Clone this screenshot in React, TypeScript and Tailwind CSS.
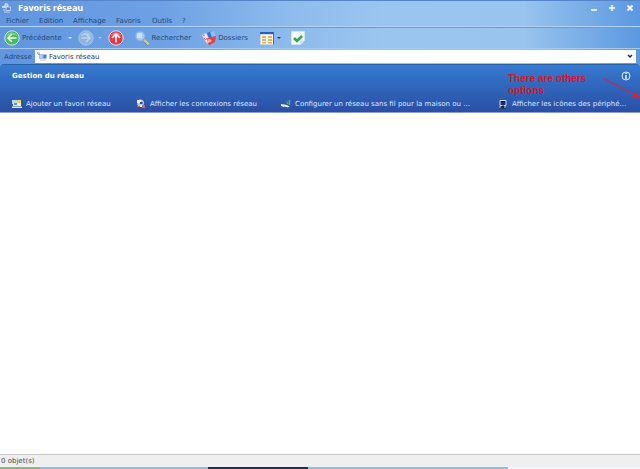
import type { ReactNode } from "react";

const menus = [
  { label: "Fichier", width: "w-[33px]" },
  { label: "Edition", width: "w-[34px]" },
  { label: "Affichage", width: "w-[43px]" },
  { label: "Favoris", width: "w-[36px]" },
  { label: "Outils", width: "w-[30px]" },
  { label: "?", width: "w-3" },
];

function AppIcon() {
  return (
    <svg viewBox="0 0 12 12" className="size-3 shrink-0" aria-hidden="true">
      <path d="M1 4h4v2H1z" fill="#c5dcf7" />
      <path d="M4 1.5l3 .5v3H3.5z" fill="#a9c9f0" stroke="#dcebfc" strokeWidth=".6" />
      <path d="M5 5h4.5v3.5H5z" fill="#5c8bcf" stroke="#dcebfc" strokeWidth=".7" />
      <path d="M2 8h2M3 10h6" stroke="#b9d3f3" />
    </svg>
  );
}

function RoundArrow({ kind }: { kind: "back" | "forward" | "up" }) {
  const fill = kind === "back" ? "#3fc154" : kind === "up" ? "#ee3442" : "#8fb3db";
  const path =
    kind === "back"
      ? "M12.5 8H4M8 4L4 8L8 12"
      : kind === "up"
        ? "M8 12.5V4M4 8L8 4L12 8"
        : "M3.5 8H12M8 4L12 8L8 12";
  return (
    <svg viewBox="0 0 16 16" className="size-4 shrink-0" aria-hidden="true">
      <circle cx="8" cy="8" r="7.2" fill={fill} stroke={kind === "forward" ? "#a9c5e4" : "#d5e5ee"} strokeWidth="1" />
      <path d="M2.5 6a6 6 0 0 1 11 0q-5-2-11 0z" fill="#fff" opacity=".28" />
      <path d={path} fill="none" stroke={kind === "forward" ? "#bfd3ea" : "#fff"} strokeWidth="1.6" />
    </svg>
  );
}

function SearchIcon() {
  return (
    <svg viewBox="0 0 16 16" className="size-4 shrink-0" aria-hidden="true">
      <path d="M10 10l4.5 4.5" stroke="#e0c56c" strokeWidth="2.6" />
      <path d="M9.5 11.5l4 4" stroke="#66748a" strokeWidth=".8" />
      <circle cx="6.2" cy="6.2" r="4.8" fill="#a5c9f2" stroke="#82aee4" strokeWidth="1.2" />
      <path d="M3 3h5v5H3z" fill="#dcecfb" opacity=".7" />
    </svg>
  );
}

function FoldersIcon() {
  return (
    <svg viewBox="0 0 16 16" className="size-4 shrink-0" aria-hidden="true">
      <path d="M1 5l4-2 4 7-3 4z" fill="#f3ecf4" stroke="#c7a9c4" strokeWidth=".6" />
      <path d="M2 5l2 1M3 8l2 2" stroke="#df6673" />
      <path d="M6 3l5-2.5 3 6-5 5z" fill="#3273df" />
      <path d="M9 1.5l4-.5 2 6-4 1z" fill="#91bdf5" />
      <path d="M5 8q3 1 5-1l5-1-1 6-6 3.5z" fill="#e94047" />
      <path d="M6 9.5l3-.5 2 2-4 2z" fill="#ffb3ad" />
    </svg>
  );
}

function ViewIcon() {
  return (
    <svg viewBox="0 0 15 13" className="h-[13px] w-[15px] shrink-0" aria-hidden="true">
      <path d="M.5.5h13v12H.5z" fill="#fff8e2" stroke="#c5d5e9" />
      <path d="M0 0h14v2.2H0z" fill="#2b5cc9" />
      <path d="M13.5 1v11.5" stroke="#3766bd" />
      <g fill="#eeb060">
        <path d="M2 4h4v2H2zM8 4h4v2H8zM2 7h4v2H2zM8 7h4v2H8zM2 10h4v1.5H2zM8 10h4v1.5H8z" />
      </g>
    </svg>
  );
}

function CheckIcon() {
  return (
    <svg viewBox="0 0 14 14" className="size-3.5 shrink-0" aria-hidden="true">
      <path d="M.5.5h13v9l-4 4h-9z" fill="#f4faff" stroke="#d2e3f4" />
      <path d="M9.5 13.5v-4h4" fill="#c9def2" />
      <path d="M3 7l3 3 5-5" fill="none" stroke="#35a836" strokeWidth="2.6" />
    </svg>
  );
}

function NetworkIcon() {
  return (
    <svg viewBox="0 0 10 9" className="h-[9px] w-2.5 shrink-0" aria-hidden="true">
      <path d="M0 1h3M1 2.5h2" stroke="#7d96b8" />
      <path d="M2.5 2.5h3v4h-3z" fill="#b9d2f1" stroke="#8ca9cf" strokeWidth=".7" />
      <path d="M6 2.5h3.5v4H6z" fill="#3b80dc" stroke="#a8bedb" strokeWidth=".7" />
      <path d="M3 8h6" stroke="#b1c3da" />
    </svg>
  );
}

const AddIcon = (
  <svg viewBox="0 0 10 10" className="size-2.5 shrink-0" aria-hidden="true">
    <path d="M0 1h5v4H0z" fill="#b9d8ed" />
    <path d="M5 1h4v4H5z" fill="#f3d34e" />
    <path d="M1 4h8v3H1z" fill="#e5edf0" />
    <path d="M2 4h3v2H2z" fill="#439cc8" />
    <path d="M0 7.5h10V9H0z" fill="#f2e6ac" />
  </svg>
);

const ConnectionsIcon = (
  <svg viewBox="0 0 10 10" className="size-2.5 shrink-0" aria-hidden="true">
    <circle cx="4.5" cy="4" r="3.5" fill="#b3c8e6" />
    <path d="M1 1h4v3H1z" fill="#f0f5fa" />
    <path d="M4 3h2.500v2H4z" fill="#28498f" />
    <path d="M1 7h2v1H1zM6 6h3v3H6z" fill="#d9625d" />
    <path d="M4 6h2v2H4z" fill="#f5ece9" />
  </svg>
);

const WirelessIcon = (
  <svg viewBox="0 0 10 10" className="size-2.5 shrink-0" aria-hidden="true">
    <path d="M0 5l6 1 3 2-3 1-6-2z" fill="#eef5e9" />
    <path d="M3 8l4 1 2-1" stroke="#40584b" fill="none" />
    <path d="M8.5 6V1M6.5 5V3" stroke="#48bd7f" strokeWidth="1.4" />
    <path d="M4 3l4-2" stroke="#36936f" strokeWidth=".7" />
  </svg>
);

const DevicesIcon = (
  <svg viewBox="0 0 10 10" className="size-2.5 shrink-0" aria-hidden="true">
    <path d="M2 1.5h6v5H2z" fill="#1626a8" stroke="#d8dfc7" />
    <path d="M3 2h4v1H3z" fill="#050e28" />
    <path d="M4 7h2v1H4zM2 9h6" fill="#191d24" stroke="#1b2330" />
    <path d="M1 8h2M6 8h2" stroke="#c9d062" />
  </svg>
);

function Task({ icon, label, span }: { icon: ReactNode; label: string; span: string }) {
  return (
    <a href="#" className={`flex items-center gap-1 whitespace-nowrap text-[#d9e9ff] ${span}`}>
      {icon}
      <span>{label}</span>
    </a>
  );
}

function Caret() {
  return <span className="block border-x-2 border-t-2 border-x-transparent border-t-current" aria-hidden="true" />;
}

export default function App() {
  return (
    <div className="flex h-screen flex-col overflow-hidden bg-white font-['DejaVu_Sans',sans-serif] text-[7px] leading-[10px] text-[#234878]">
      <header className="bg-[linear-gradient(to_right,#6096df_0%,#6da1e5_25%,#8dbbec_45%,#9ac5ee_60%,#98c4ee_82%,#5b98e0_100%)]">
        <div className="flex h-[15px] items-center border-t border-[#5585c8] pr-1 pl-px text-white">
          <AppIcon />
          <h1 className="ml-[5px] flex-1 font-['Open_Sans','DejaVu_Sans',sans-serif] text-[9px] font-bold">Favoris réseau</h1>
          <div className="flex gap-1.5">
            <button aria-label="Réduire" className="flex size-3 items-center justify-center">
              <svg viewBox="0 0 8 8" className="size-2"><path d="M1 6h6" stroke="#fff" strokeWidth="1.5" /></svg>
            </button>
            <button aria-label="Agrandir" className="flex size-3 items-center justify-center">
              <svg viewBox="0 0 8 8" className="size-2"><path d="M1 4h6M4 1v6" stroke="#fff" strokeWidth="1.5" /></svg>
            </button>
            <button aria-label="Fermer" className="flex size-3 items-center justify-center">
              <svg viewBox="0 0 8 8" className="size-2"><path d="M1.5 1.5l5 5m0-5l-5 5" stroke="#fff" strokeWidth="1.8" /></svg>
            </button>
          </div>
        </div>
        <nav className="flex h-3 items-center border-b border-[#b1d2f5] pl-1.5">
          {menus.map((menu) => (
            <button key={menu.label} className={`shrink-0 text-left whitespace-nowrap ${menu.width}`}>{menu.label}</button>
          ))}
        </nav>
        <div className="flex h-[21px] items-center border-t border-[#669bdd] pl-1">
          <button className="flex items-center gap-0.5"><RoundArrow kind="back" />Précédente</button>
          <button aria-label="Historique précédent" className="ml-1.5 text-[#e5f2ff]"><Caret /></button>
          <button aria-label="Suivante" className="ml-1.5"><RoundArrow kind="forward" /></button>
          <button aria-label="Historique suivant" className="ml-1 text-[#a9c9ec]"><Caret /></button>
          <button aria-label="Dossier parent" className="ml-1.5"><RoundArrow kind="up" /></button>
          <button className="ml-2.5 flex items-center gap-0.5"><SearchIcon />Rechercher</button>
          <button className="ml-2.5 flex items-center gap-px"><FoldersIcon />Dossiers</button>
          <button aria-label="Affichage" className="ml-3 flex items-center gap-0.5 text-[#183a69]"><ViewIcon /><Caret /></button>
          <button aria-label="Valider" className="ml-2.5"><CheckIcon /></button>
        </div>
        <div className="flex h-4 items-center border-t border-[#a5c8ef] pr-1 pl-1">
          <label htmlFor="address" className="w-[31px] shrink-0">Adresse</label>
          <div className="flex h-[13px] flex-1 items-center bg-white px-0.5">
            <NetworkIcon />
            <input id="address" defaultValue="Favoris réseau" className="h-3 min-w-0 flex-1 pl-0.5 text-[#29394f] outline-none" />
            <button aria-label="Liste des adresses" className="flex h-3 w-2 items-center justify-center">
              <svg viewBox="0 0 6 5" className="h-[5px] w-1.5"><path d="M1 1l2 2 2-2" fill="none" stroke="#15294d" strokeWidth="1.5" /></svg>
            </button>
          </div>
        </div>
      </header>
      <div className="shrink-0 bg-[#6ba1e4]">
        <section className="relative flex h-[49px] flex-col justify-between rounded-t border-t border-b border-t-[#2c63ae] border-b-[#8c9cc8] bg-linear-to-b from-[#367bd0] to-[#294fa5] pt-1.5 pb-[3px] text-white">
          <div className="flex items-center justify-between pr-[9px] pl-3">
            <h2 className="font-bold">Gestion du réseau</h2>
            <button aria-label="Informations">
              <svg viewBox="0 0 10 10" className="size-2.5"><circle cx="5" cy="5" r="4" fill="none" stroke="#e4f0ff" /><path d="M5 4v4M5 2v1" stroke="#fff" strokeWidth="1.3" /></svg>
            </button>
          </div>
          <div className="flex pl-3">
            <Task icon={AddIcon} label="Ajouter un favori réseau" span="w-[124px]" />
            <Task icon={ConnectionsIcon} label="Afficher les connexions réseau" span="w-[145px]" />
            <Task icon={WirelessIcon} label="Configurer un réseau sans fil pour la maison ou ..." span="w-[217px]" />
            <Task icon={DevicesIcon} label="Afficher les icônes des périphé..." span="w-[142px]" />
          </div>
          <p className="absolute top-2 right-8 w-[100px] font-['Liberation_Sans',sans-serif] text-[10px] leading-3 font-bold text-[#d8142a]">There are others<br />options</p>
          <svg viewBox="0 0 38 22" className="absolute top-3 right-0 h-[22px] w-[38px]" aria-hidden="true">
            <path d="M1 1l34 18" stroke="#cd2744" strokeWidth="1.2" />
            <path d="M38 21.5l-9-1 5-6z" fill="#cd2744" />
          </svg>
        </section>
      </div>
      <main className="flex-1 bg-white" />
      <footer className="flex h-[13px] shrink-0 items-center border-t border-[#c6c6c6] bg-[#efefef] px-px text-[#4b4b4b]">0 objet(s)</footer>
      <div className="flex h-0.5 shrink-0 bg-[#8fbde6]" aria-hidden="true">
        <span className="w-10 bg-[#80bd70]" />
        <span className="ml-[168px] w-[100px] bg-[#202d61]" />
        <span className="ml-auto w-[132px] bg-[#edf6fd]" />
      </div>
    </div>
  );
}
